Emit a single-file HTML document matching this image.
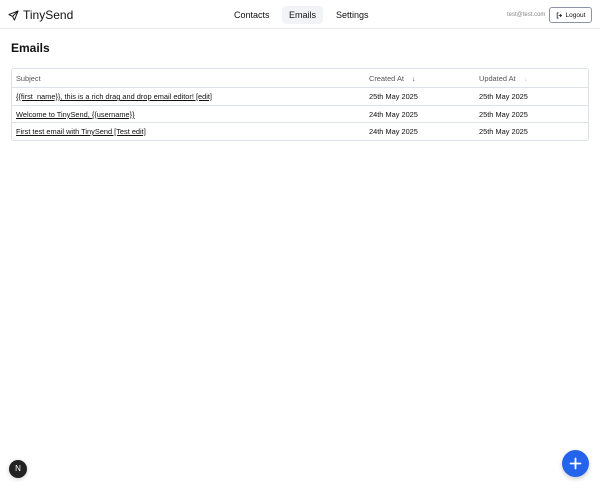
<!DOCTYPE html>
<html><head><style>
*{box-sizing:border-box;margin:0;padding:0}
body{width:600px;height:488px;background:#fff;font-family:"Liberation Sans",sans-serif;color:#111;position:relative;overflow:hidden}
.hdr{position:absolute;left:0;top:0;width:600px;height:29px;border-bottom:1px solid #e8eaee}
.logo{position:absolute;left:8px;top:8px;font-size:12px;font-weight:400;display:flex;align-items:center;gap:4px}
.nav{position:absolute;top:6px;font-size:9px;height:18px;line-height:18px;padding:0 7px;border-radius:4px}
.email{position:absolute;left:507px;top:12px;font-size:6px;color:#888}
.logout{position:absolute;left:549px;top:7px;width:43px;height:16px;border:1px solid #8a93a8;border-radius:3px;font-size:6.5px;display:flex;align-items:center;justify-content:center;gap:3px}
h1{position:absolute;left:11px;top:41px;font-size:12px;font-weight:700}
.tbl{position:absolute;left:11px;top:68px;width:578px;height:73px;border:1px solid #dde1e8;border-radius:3px}
.row{position:absolute;left:0;width:576px;font-size:7.4px;border-bottom:1px solid #dde1e8}
.row span{position:absolute;top:0}
.c1{left:4px}.c2{left:357px}.c3{left:467px}
u{text-decoration:underline}
</style></head><body>
<div class="hdr">
 <div class="logo"><svg width="11" height="11" viewBox="0 0 24 24" fill="none" stroke="#111" stroke-width="2.2" stroke-linejoin="round"><path d="M22 2L2 10l8 4 4 8z M22 2L10 14"/></svg>TinySend</div>
 <div class="nav" style="left:227px">Contacts</div>
 <div class="nav" style="left:282px;background:#f1f3f6">Emails</div>
 <div class="nav" style="left:329px">Settings</div>
 <div class="email">test@test.com</div>
 <div class="logout"><svg width="7" height="7" viewBox="0 0 24 24" fill="none" stroke="#111" stroke-width="2.5"><path d="M9 3H4v18h5M14 7l5 5-5 5M19 12H9"/></svg>Logout</div>
</div>
<h1>Emails</h1>
<div class="tbl">
 <div class="row" style="top:0;height:19px;line-height:19px;color:#555"><span class="c1">Subject</span><span class="c2">Created At</span><span style="left:400px">↓</span><span class="c3">Updated At</span><span style="left:512px;color:#ccc">↓</span></div>
 <div class="row" style="top:19px;height:18px;line-height:18px"><span class="c1"><u>{{first_name}}, this is a rich drag and drop email editor! [edit]</u></span><span class="c2">25th May 2025</span><span class="c3">25th May 2025</span></div>
 <div class="row" style="top:37px;height:17px;line-height:17px"><span class="c1"><u>Welcome to TinySend, {{username}}</u></span><span class="c2">24th May 2025</span><span class="c3">25th May 2025</span></div>
 <div class="row" style="top:54px;height:17px;line-height:17px;border-bottom:none"><span class="c1"><u>First test email with TinySend [Test edit]</u></span><span class="c2">24th May 2025</span><span class="c3">25th May 2025</span></div>
</div>
<div style="position:absolute;left:9px;top:460px;width:18px;height:18px;border-radius:50%;background:#222;color:#fff;font-size:8px;text-align:center;line-height:18px;box-shadow:0 1px 4px rgba(0,0,0,.2)">N</div>
<div style="position:absolute;left:562px;top:450px;width:27px;height:27px;border-radius:50%;background:#2463eb;box-shadow:0 2px 4px rgba(0,0,0,.2)"><svg width="27" height="27" viewBox="0 0 27 27"><path d="M13.5 8.5v10M8.5 13.5h10" stroke="#fff" stroke-width="1.8" stroke-linecap="round"/></svg></div>
</body></html>
